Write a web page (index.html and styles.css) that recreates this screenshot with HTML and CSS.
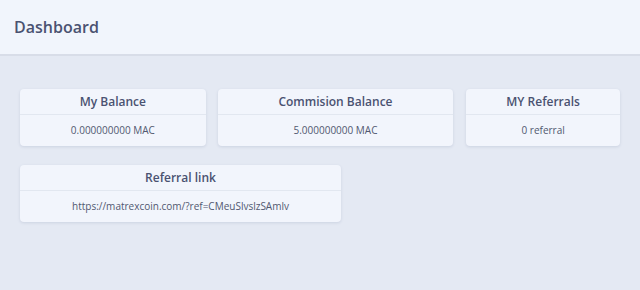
FILE: index.html
```html
<!DOCTYPE html>
<html lang="en">
<head>
    <meta charset="UTF-8">
    <meta name="viewport" content="width=device-width, initial-scale=1.0">
    <title>Dashboard</title>
    <link rel="stylesheet" href="styles.css">
</head>
<body>
    <div class="topbar">
        <h1>Dashboard</h1>
    </div>
    <div class="content">
        <div class="row">
            <div class="card card-balance">
                <div class="card-title">My Balance</div>
                <div class="card-body">0.000000000 MAC</div>
            </div>
            <div class="card card-commision">
                <div class="card-title">Commision Balance</div>
                <div class="card-body">5.000000000 MAC</div>
            </div>
            <div class="card card-referrals">
                <div class="card-title">MY Referrals</div>
                <div class="card-body">0 referral</div>
            </div>
        </div>
        <div class="row">
            <div class="card card-link">
                <div class="card-title">Referral link</div>
                <div class="card-body">https://matrexcoin.com/?ref=CMeuSlvslzSAmlv</div>
            </div>
        </div>
    </div>
</body>
</html>
```

FILE: styles.css
```css
body {
    font-family: "Open Sans", sans-serif;
    background-color: #e4e9f3;
    margin: 0;
    color: #4a5271;
}
.topbar {
    height: 54px;
    background-color: #f1f5fc;
    border-bottom: 2px solid #d8dde8;
    display: flex;
    align-items: center;
    padding: 0 14px;
}
.topbar h1 {
    margin: 0 0 1px;
    font-size: 16px;
    font-weight: 600;
    color: #4a5271;
}
.content {
    padding: 33px 20px;
    display: flex;
    flex-direction: column;
    gap: 19px;
}
.row {
    display: flex;
    gap: 12px;
}
.card {
    background-color: #f2f5fc;
    border-radius: 4px;
    box-shadow: 0 1px 3px rgba(70, 90, 130, 0.15);
    text-align: center;
}
.card-balance { width: 186px; }
.card-commision { width: 236px; }
.card-referrals { width: 154px; margin-left: 1px; }
.card-link { width: 321px; }
.card-title {
    height: 25px;
    line-height: 26px;
    font-size: 12px;
    font-weight: 600;
    border-bottom: 1px solid #e2e7f0;
}
.card-body {
    height: 31px;
    line-height: 31px;
    font-size: 10px;
    color: #515870;
}
```
